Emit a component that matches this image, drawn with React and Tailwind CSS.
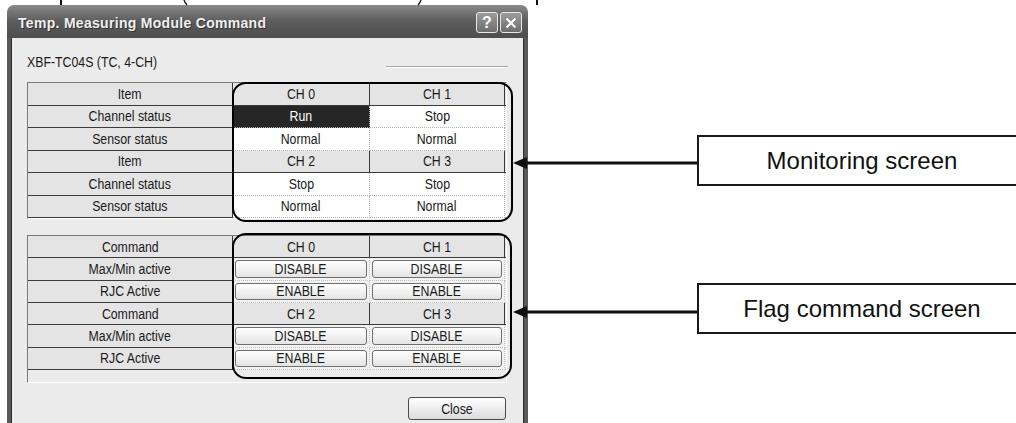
import React from "react";

const F = "font-['Liberation_Sans',Arial,sans-serif]";

function T({ children }) {
  return <span className="inline-block text-[14px] leading-none scale-x-[0.88] origin-center whitespace-nowrap">{children}</span>;
}

function Label({ children }) {
  return (
    <div className="flex items-center justify-center bg-[#e4e4e4] border-r border-b border-[#3a3a3a] text-[#1a1a1a]">
      <T>{children}</T>
    </div>
  );
}
function Head({ children }) {
  return (
    <div className="flex items-center justify-center bg-[#e4e4e4] border-r border-b border-[#3a3a3a] text-[#1a1a1a]">
      <T>{children}</T>
    </div>
  );
}
function Data({ children, dark }) {
  return (
    <div
      className={
        "flex items-center justify-center border-r border-b border-dotted border-[#b4b4b4] " +
        (dark ? "bg-[#262626] text-white" : "bg-white text-[#1a1a1a]")
      }
    >
      <T>{children}</T>
    </div>
  );
}
function Pad({ head }) {
  return <div className={head ? "bg-[#e4e4e4] border-b border-[#3a3a3a]" : "bg-[#f2f2f2] border-b border-dotted border-[#c4c4c4]"} />;
}
function BtnCell({ children }) {
  return (
    <div className="flex p-[2px] bg-[#f2f2f2] border-r border-b border-dotted border-[#c4c4c4]">
      <div className="flex-1 flex items-center justify-center rounded-[3px] border border-[#707070] bg-linear-to-b from-white to-[#e4e4e4] text-[#1a1a1a]">
        <T>{children}</T>
      </div>
    </div>
  );
}

export default function App() {
  return (
    <div className={"relative w-[1016px] h-[423px] overflow-hidden bg-white " + F}>
      {/* text fragments from above, cut by the crop */}
      <svg className="absolute left-0 top-0" width="1016" height="8">
        <line x1="61" y1="0" x2="61" y2="5" stroke="#111" strokeWidth="2" />
        <path d="M184 0 Q185 3 187 5" stroke="#111" strokeWidth="1.3" fill="none" />
        <path d="M421 0 Q420 3 418 5" stroke="#111" strokeWidth="1.3" fill="none" />
        <line x1="537" y1="0" x2="537" y2="5" stroke="#111" strokeWidth="2" />
      </svg>

      <div className="flex">
        {/* dialog window */}
        <div className="ml-[7px] mt-[5px] w-[521px] h-[418px] flex flex-col shrink-0">
          <div className="h-[33px] rounded-t-[7px] bg-linear-to-b from-[#8a8a8a] via-[#5c5c5c] to-[#4e4e4e] flex items-center pl-[11px] pr-[6px]">
            <span className="text-[14px] font-bold tracking-[0.3px] text-[#f0f0f0] [text-shadow:1px_1px_0_#333] mt-[4px]">
              Temp. Measuring Module Command
            </span>
            <div className="ml-auto flex gap-[2px] mt-[2px]">
              <div className="w-[22px] h-[21px] rounded-[3px] border border-[#e8e8e8] bg-linear-to-b from-[#9c9c9c] to-[#6e6e6e] flex items-center justify-center text-white text-[16px] font-bold leading-none">
                ?
              </div>
              <div className="w-[22px] h-[21px] rounded-[3px] border border-[#e8e8e8] bg-linear-to-b from-[#9c9c9c] to-[#6e6e6e] flex items-center justify-center">
                <svg width="12" height="12" viewBox="0 0 12 12">
                  <path d="M1.5 1.5 L10.5 10.5 M10.5 1.5 L1.5 10.5" stroke="white" strokeWidth="2" />
                </svg>
              </div>
            </div>
          </div>
          <div className="flex-1 flex border-x-[4px] border-[#595959]">
            <div className="flex-1 flex flex-col bg-[#ebebeb] border-x border-[#2e2e2e] pl-[15px] pr-[16px]">
              <div className="mt-[17px] h-[14px] flex items-center">
                <span className="inline-block text-[14px] leading-none scale-x-[0.88] origin-left whitespace-nowrap text-[#1a1a1a]">XBF-TC04S (TC, 4-CH)</span>
                <div className="ml-auto mr-[-1px] w-[122px] mt-[10px] border-t border-[#a8a8a8] border-b border-b-white" />
              </div>

              {/* monitoring table */}
              <div className="mt-[13px] w-[480px] border-t border-l border-[#7a7a7a] border-b border-r border-b-white border-r-white grid grid-cols-[205px_137px_135px_1fr] grid-rows-[repeat(6,22.5px)]">
                <Label>Item</Label><Head>CH 0</Head><Head>CH 1</Head><Pad head />
                <Label>Channel status</Label><Data dark>Run</Data><Data>Stop</Data><Pad />
                <Label>Sensor status</Label><Data>Normal</Data><Data>Normal</Data><Pad />
                <Label>Item</Label><Head>CH 2</Head><Head>CH 3</Head><Pad head />
                <Label>Channel status</Label><Data>Stop</Data><Data>Stop</Data><Pad />
                <Label>Sensor status</Label><Data>Normal</Data><Data>Normal</Data><Pad />
              </div>

              {/* flag command table */}
              <div className="mt-[16px] w-[480px] h-[148px] border-t border-l border-[#7a7a7a] border-b border-r border-b-white border-r-white flex flex-col">
                <div className="grid grid-cols-[205px_137px_135px_1fr] grid-rows-[repeat(6,22.33px)]">
                  <Label>Command</Label><Head>CH 0</Head><Head>CH 1</Head><Pad head />
                  <Label>Max/Min active</Label><BtnCell>DISABLE</BtnCell><BtnCell>DISABLE</BtnCell><Pad />
                  <Label>RJC Active</Label><BtnCell>ENABLE</BtnCell><BtnCell>ENABLE</BtnCell><Pad />
                  <Label>Command</Label><Head>CH 2</Head><Head>CH 3</Head><Pad head />
                  <Label>Max/Min active</Label><BtnCell>DISABLE</BtnCell><BtnCell>DISABLE</BtnCell><Pad />
                  <Label>RJC Active</Label><BtnCell>ENABLE</BtnCell><BtnCell>ENABLE</BtnCell><Pad />
                </div>
              </div>

              <div className="mt-[14px] flex justify-end pr-[1px]">
                <div className="w-[98px] h-[23px] rounded-[3px] border border-[#4a4a4a] bg-linear-to-b from-white to-[#dcdcdc] flex items-center justify-center text-[#1a1a1a]">
                  <T>Close</T>
                </div>
              </div>
            </div>
          </div>
        </div>

        {/* callout labels */}
        <div className="flex flex-col pl-[169px] shrink-0">
          <div className="mt-[135px] w-[330px] h-[51px] border-2 border-[#1a1a1a] flex items-center justify-center text-[24px] text-[#111]">
            Monitoring screen
          </div>
          <div className="mt-[97px] w-[330px] h-[51px] border-2 border-[#1a1a1a] flex items-center justify-center text-[24px] text-[#111]">
            Flag command screen
          </div>
        </div>
      </div>

      {/* annotation outlines */}
      <div className="absolute left-[232px] top-[82px] w-[281px] h-[140px] border-2 border-black rounded-[14px]" />
      <div className="absolute left-[232px] top-[233px] w-[280px] h-[146px] border-2 border-black rounded-[14px]" />

      {/* arrows */}
      <svg className="absolute left-0 top-0 pointer-events-none" width="1016" height="423">
        <line x1="524" y1="163" x2="697" y2="163" stroke="#111" strokeWidth="3" />
        <polygon points="513,163 527,157 527,169" fill="#111" />
        <line x1="524" y1="312" x2="697" y2="312" stroke="#111" strokeWidth="3" />
        <polygon points="513,312 527,306 527,318" fill="#111" />
      </svg>
    </div>
  );
}
